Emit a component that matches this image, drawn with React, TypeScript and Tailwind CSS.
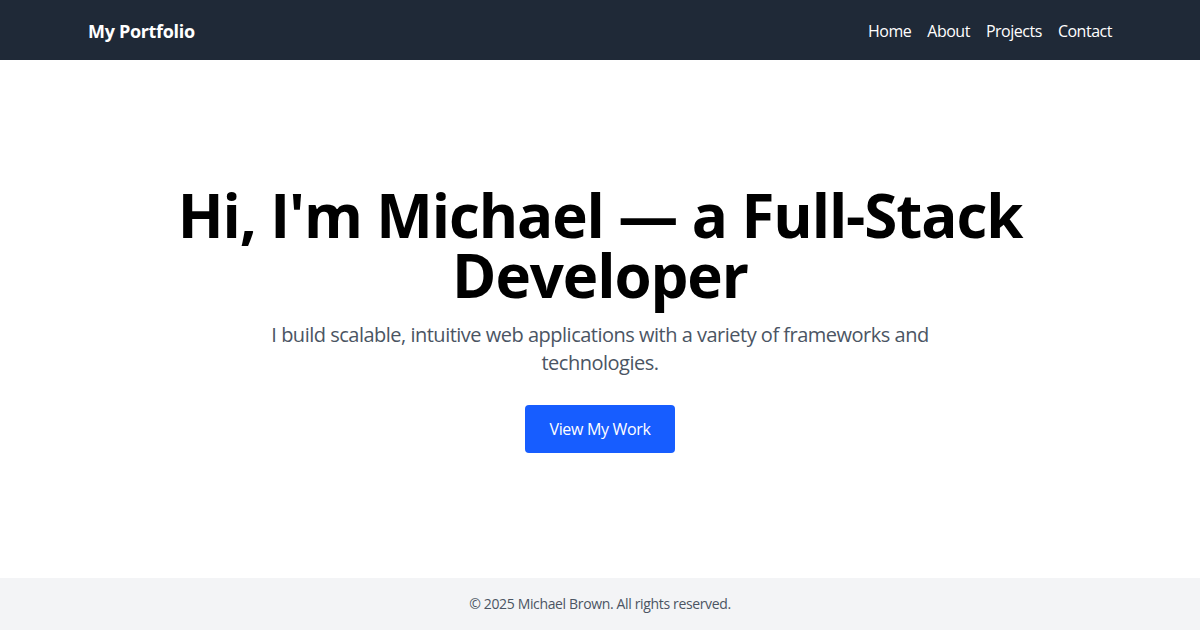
const navLinks = ["Home", "About", "Projects", "Contact"];

export default function App() {
  return (
    <div className="min-h-screen flex flex-col bg-white font-['Segoe_UI','Open_Sans',sans-serif] tracking-[-0.02em] text-black">
      <header className="bg-[#1f2937] text-white">
        <nav className="max-w-5xl mx-auto h-[60px] pt-px flex items-center justify-between">
          <a href="#" className="text-lg font-bold">
            My Portfolio
          </a>
          <ul className="flex gap-4 text-base tracking-[-0.03em]">
            {navLinks.map((link) => (
              <li key={link}>
                <a href="#" className="hover:text-gray-300">
                  {link}
                </a>
              </li>
            ))}
          </ul>
        </nav>
      </header>

      <main className="flex-1 flex flex-col items-center justify-center text-center px-4">
        <h1 className="max-w-5xl text-6xl leading-none font-bold tracking-[-0.018em] mb-4">
          Hi, I'm Michael — a Full-Stack Developer
        </h1>
        <p className="max-w-2xl text-xl leading-7 tracking-tight text-[#4b5563]">
          I build scalable, intuitive web applications with a variety of
          frameworks and technologies.
        </p>
        <a
          href="#"
          className="mt-7 inline-block rounded px-6 py-3 bg-[#175dff] text-white text-base hover:bg-blue-700"
        >
          View My Work
        </a>
      </main>

      <footer className="bg-[#f3f4f6] py-4 text-center text-sm tracking-[-0.025em] text-[#4b5563]">
        © 2025 Michael Brown. All rights reserved.
      </footer>
    </div>
  );
}
